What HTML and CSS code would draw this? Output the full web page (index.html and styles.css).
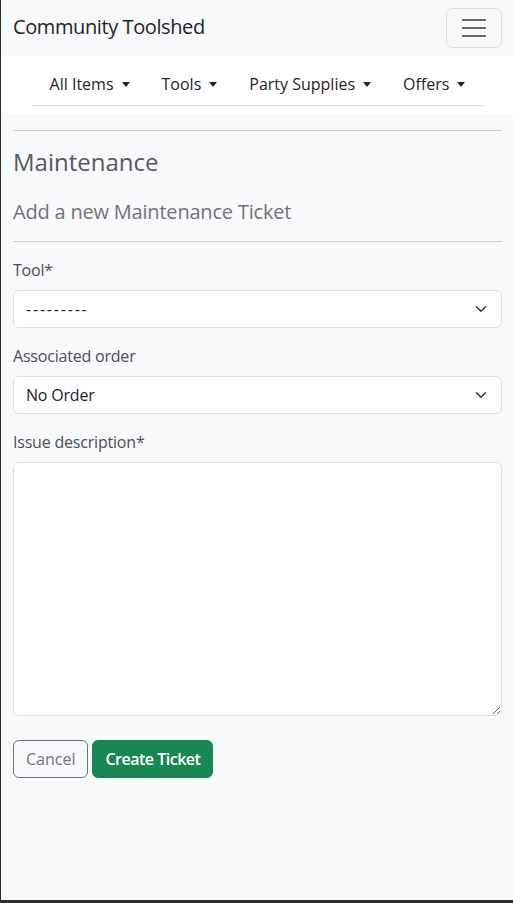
FILE: index.html
```html
<!DOCTYPE html>
<html lang="en">
<head>
<meta charset="utf-8">
<title>Maintenance - Community Toolshed</title>
<link rel="stylesheet" href="styles.css">
</head>
<body>
<div class="page">
  <header class="navbar">
    <a class="brand" href="#">Community Toolshed</a>
    <button class="toggler" type="button" aria-label="Toggle navigation">
      <span class="bar"></span><span class="bar"></span><span class="bar"></span>
    </button>
  </header>
  <nav class="subnav">
    <ul class="nav-list">
      <li><a class="nav-link dropdown" href="#">All Items</a></li>
      <li><a class="nav-link dropdown" href="#">Tools</a></li>
      <li><a class="nav-link dropdown" href="#">Party Supplies</a></li>
      <li><a class="nav-link dropdown" href="#">Offers</a></li>
    </ul>
  </nav>
  <main class="content">
    <hr class="rule">
    <h3 class="title">Maintenance</h3>
    <h5 class="subtitle">Add a new Maintenance Ticket</h5>
    <hr class="rule">
    <form class="form">
      <div class="field">
        <label class="label" for="tool">Tool*</label>
        <select class="select select-dashes" id="tool"><option>---------</option></select>
      </div>
      <div class="field">
        <label class="label" for="order">Associated order</label>
        <select class="select" id="order"><option>No Order</option></select>
      </div>
      <div class="field">
        <label class="label" for="desc">Issue description*</label>
        <textarea class="textarea" id="desc"></textarea>
      </div>
      <div class="actions">
        <button type="button" class="btn btn-outline">Cancel</button>
        <button type="submit" class="btn btn-success">Create Ticket</button>
      </div>
    </form>
  </main>
</div>
</body>
</html>
```
FILE: styles.css
```css
html, body {
  margin: 0;
  padding: 0;
  background: #2d2d2d;
}
body {
  font-family: "Open Sans", "Liberation Sans", sans-serif;
  font-size: 16px;
  line-height: 24px;
  color: #212529;
}
.page {
  margin-left: 1px;
  height: 900px;
  background: #f8f9fa;
  overflow: hidden;
}
.navbar {
  height: 56px;
  box-sizing: border-box;
  padding: 0 11px 0 12px;
  display: flex;
  align-items: center;
  justify-content: space-between;
  background: #f8f9fa;
}
.brand {
  font-size: 20px;
  line-height: 30px;
  color: #212529;
  text-decoration: none;
  letter-spacing: -0.4px;
  margin-top: -2px;
}
.toggler {
  width: 56px;
  height: 40px;
  margin-top: -1px;
  box-sizing: border-box;
  border: 1px solid rgba(0,0,0,0.1);
  border-radius: 6px;
  background: transparent;
  display: flex;
  flex-direction: column;
  align-items: center;
  justify-content: center;
  gap: 6px;
  padding: 0;
}
.toggler .bar {
  display: block;
  width: 24px;
  height: 2px;
  background: #6b6b6b;
}
.subnav {
  background: #fff;
  padding: 8px 29px 8px 30px;
}
.nav-list {
  list-style: none;
  margin: 0;
  padding: 0;
  display: flex;
  justify-content: center;
  border-bottom: 1px solid #dee2e6;
}
.nav-link {
  display: block;
  padding: 8px 16px 9px;
  color: #212529;
  text-decoration: none;
}
.dropdown::after {
  content: "";
  display: inline-block;
  margin-left: 8px;
  vertical-align: 3px;
  border-top: 5px solid;
  border-left: 4px solid transparent;
  border-right: 4px solid transparent;
}
.content {
  padding: 0 11px 0 12px;
}
.rule {
  margin: 16px 0;
  border: 0;
  border-top: 1px solid #cdcfd1;
  height: 0;
}
.title {
  margin: 0;
  font-size: 24px;
  line-height: 29px;
  font-weight: 400;
  color: #555a5f;
}
.subtitle {
  margin: 24px 0 0;
  padding-bottom: 1px;
  font-size: 20px;
  line-height: 24px;
  font-weight: 400;
  color: #6c757d;
  letter-spacing: -0.2px;
}
.form {
  display: flex;
  flex-direction: column;
  gap: 16px;
}
.field {
  display: flex;
  flex-direction: column;
  gap: 8px;
}
.label {
  color: #495057;
  letter-spacing: -0.2px;
}
.select {
  -webkit-appearance: none;
  appearance: none;
  height: 38px;
  box-sizing: border-box;
  padding: 6px 36px 6px 12px;
  font-family: inherit;
  font-size: 16px;
  line-height: 24px;
  color: #212529;
  background-color: #fff;
  background-image: url("data:image/svg+xml,%3csvg xmlns='http://www.w3.org/2000/svg' viewBox='0 0 16 16'%3e%3cpath fill='none' stroke='%23343a40' stroke-linecap='round' stroke-linejoin='round' stroke-width='2' d='m2 5 6 6 6-6'/%3e%3c/svg%3e");
  background-repeat: no-repeat;
  background-position: right 12px center;
  background-size: 16px 12px;
  border: 1px solid #dee2e6;
  border-radius: 6px;
  letter-spacing: -0.2px;
}
.select-dashes {
  letter-spacing: 1.8px;
}
.textarea {
  height: 254px;
  box-sizing: border-box;
  padding: 6px 12px;
  font-family: inherit;
  font-size: 16px;
  background: #fff;
  border: 1px solid #dee2e6;
  border-radius: 6px;
  resize: vertical;
}
.actions {
  display: flex;
  gap: 4px;
  margin-top: 8px;
}
.btn {
  height: 38px;
  box-sizing: border-box;
  padding: 6px 12px;
  font-family: inherit;
  font-size: 16px;
  line-height: 24px;
  border-radius: 6px;
  border: 1px solid transparent;
}
.btn-outline {
  color: #6c757d;
  border-color: #6c757d;
  background: transparent;
}
.btn-success {
  color: #fff;
  background: #198754;
  border-color: #198754;
  font-weight: 600;
  letter-spacing: -0.5px;
}
```
